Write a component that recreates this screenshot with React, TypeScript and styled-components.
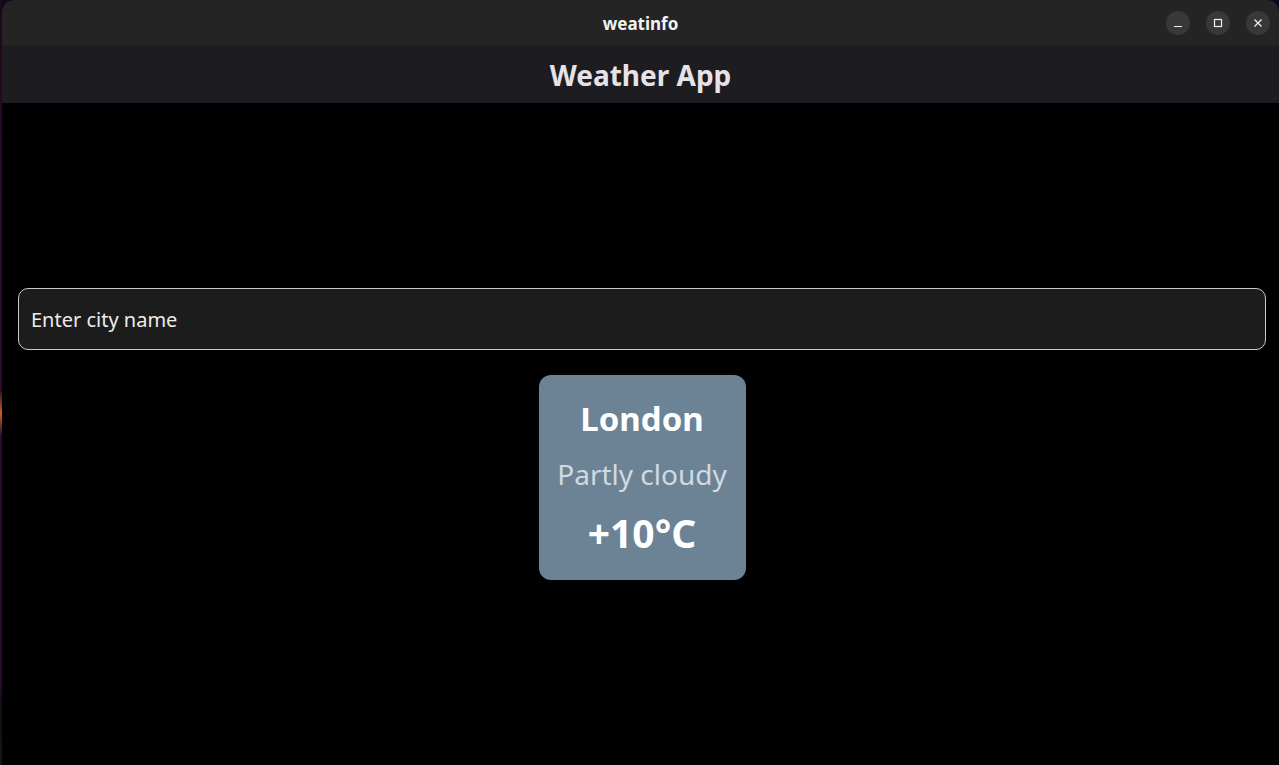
import styled, { createGlobalStyle } from "styled-components";

const GlobalStyle = createGlobalStyle`
  html, body {
    margin: 0;
    padding: 0;
    height: 100%;
    background: #14061a;
    font-family: "Noto Sans", "Open Sans", "DejaVu Sans", sans-serif;
  }
  #root {
    height: 100%;
  }
`;

const Desktop = styled.div`
  display: flex;
  height: 765px;
  width: 1279px;
  overflow: hidden;
`;

const Strip = styled.div`
  width: 2px;
  flex: none;
  background: linear-gradient(
    to bottom,
    #1a0a1a 0%,
    #2e0a30 30%,
    #2e0a30 51%,
    #c8601a 54%,
    #2a0830 57%,
    #2a0830 90%,
    #111 92%,
    #151515 100%
  );
`;

const Window = styled.div`
  flex: 1;
  display: flex;
  flex-direction: column;
  background: #000;
  border-top-left-radius: 12px;
  border-top-right-radius: 12px;
  overflow: hidden;
`;

const TitleBar = styled.div`
  height: 46px;
  flex: none;
  display: flex;
  align-items: center;
  justify-content: center;
  background: #242424;
  border-bottom: 1px solid #1a1a1a;
  position: relative;
  color: #f2f2f2;
  font-size: 17px;
  font-weight: 700;
`;

const WindowButtons = styled.div`
  position: absolute;
  right: 9px;
  top: 11px;
  display: flex;
  gap: 16px;
`;

const WinButton = styled.div`
  width: 24px;
  height: 24px;
  border-radius: 50%;
  background: #383838;
  display: flex;
  align-items: center;
  justify-content: center;
`;

const AppHeader = styled.header`
  height: 56px;
  flex: none;
  display: flex;
  align-items: center;
  justify-content: center;
  background: #1d1c20;
  color: #e6e3e8;
  font-size: 28px;
  font-weight: 700;
`;

const Content = styled.main`
  flex: 1;
  display: flex;
  flex-direction: column;
  align-items: center;
  justify-content: center;
  padding: 0 13px 0 16px;
  gap: 25px;
`;

const CityInput = styled.input`
  box-sizing: border-box;
  width: 100%;
  height: 62px;
  background: #1c1c1c;
  border: 1px solid #c9c9c9;
  border-radius: 10px;
  padding: 0 12px;
  color: #ececec;
  font-family: inherit;
  font-size: 20px;
  outline: none;

  &::placeholder {
    color: #ececec;
  }
`;

const Card = styled.section`
  box-sizing: border-box;
  width: 207px;
  height: 205px;
  background: #6c8396;
  border-radius: 12px;
  display: flex;
  flex-direction: column;
  align-items: center;
  justify-content: center;
  gap: 22px;
`;

const CardText = styled.div<{ size: number; color: string; bold?: boolean }>`
  font-size: ${(p) => p.size}px;
  color: ${(p) => p.color};
  font-weight: ${(p) => (p.bold ? 700 : 400)};
  line-height: 1.1;
`;

const App = () => {
  return (
    <>
      <GlobalStyle />
      <Desktop>
        <Strip />
        <Window>
          <TitleBar>
            weatinfo
            <WindowButtons>
              <WinButton>
                <svg width="10" height="10" viewBox="0 0 10 10">
                  <line x1="1" y1="8.5" x2="9" y2="8.5" stroke="#f0f0f0" strokeWidth="1.2" />
                </svg>
              </WinButton>
              <WinButton>
                <svg width="10" height="10" viewBox="0 0 10 10">
                  <rect x="1.5" y="1.5" width="7" height="7" fill="none" stroke="#f0f0f0" strokeWidth="1.2" />
                </svg>
              </WinButton>
              <WinButton>
                <svg width="10" height="10" viewBox="0 0 10 10">
                  <path d="M1.5 1.5 L8.5 8.5 M8.5 1.5 L1.5 8.5" stroke="#f0f0f0" strokeWidth="1.3" />
                </svg>
              </WinButton>
            </WindowButtons>
          </TitleBar>
          <AppHeader>Weather App</AppHeader>
          <Content>
            <CityInput placeholder="Enter city name" />
            <Card>
              <CardText size={33} color="#ffffff" bold>
                London
              </CardText>
              <CardText size={28} color="#d2d9e0">
                Partly cloudy
              </CardText>
              <CardText size={39} color="#ffffff" bold>
                +10°C
              </CardText>
            </Card>
          </Content>
        </Window>
      </Desktop>
    </>
  );
};

export default App;
